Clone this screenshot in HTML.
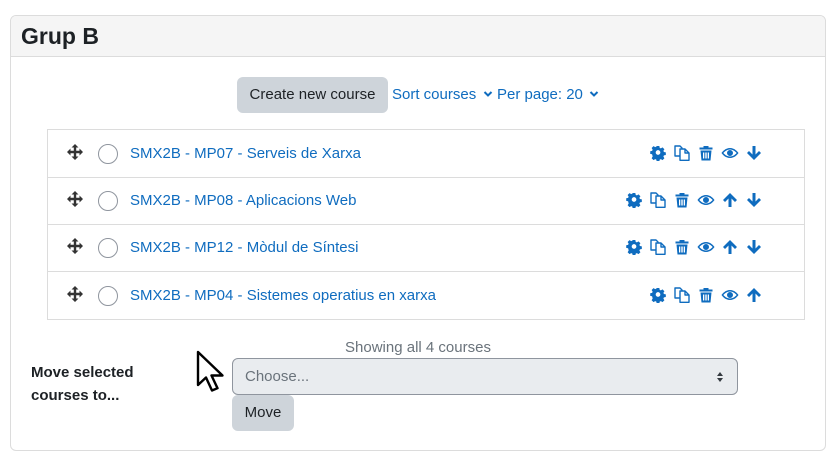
<!DOCTYPE html>
<html><head><meta charset="utf-8"><style>
*{box-sizing:border-box;margin:0;padding:0}
body{width:835px;height:468px;background:#fff;font-family:"Liberation Sans",sans-serif;color:#1d2125;position:relative;overflow:hidden}
.a{position:absolute}
.card{left:10px;top:15px;width:816px;height:436px;border:1px solid #dcdcdc;border-radius:6px;overflow:hidden}
.hdr{left:0;top:0;width:100%;height:41px;background:#f5f5f5;border-bottom:1px solid #dcdcdc}
.title{left:10px;top:7px;font-size:23px;font-weight:bold}
.btn{background:#ced4da;border-radius:6px;font-size:15px;color:#1d2125;text-align:center}
.link{color:#0f6cbf;font-size:15px}
.list{left:47px;top:129px;width:758px;height:191px;border:1px solid #dcdcdc}
.row{position:absolute;left:0;width:100%;height:48px;border-bottom:1px solid #dcdcdc}
.row:last-child{border-bottom:none}
.cb{position:absolute;left:50px;top:14px;width:20px;height:20px;border:1px solid #8f959e;border-radius:50%}
.nm{position:absolute;left:82px;top:15px;font-size:15px;color:#0f6cbf}
.mv{position:absolute;left:19px;top:14px}
.ic{position:absolute;top:15px}
</style></head><body>
<svg width="0" height="0" style="position:absolute"><defs>
<symbol id="gear" viewBox="0 0 16 16"><path fill="#0f6cbf" d="M6.6 1h2.8l.4 2 1.2.6 1.8-1.1 2 2-1.1 1.8.6 1.2 2 .4v2.8l-2 .4-.6 1.2 1.1 1.8-2 2-1.8-1.1-1.2.6-.4 2H6.6l-.4-2-1.2-.6-1.8 1.1-2-2 1.1-1.8L1.7 9.8l-2-.4V6.6l2-.4.6-1.2L1.2 3.2l2-2L5 2.3l1.2-.6zM8 5.5a2.5 2.5 0 100 5 2.5 2.5 0 000-5z" transform="translate(0.5 0) scale(.94)"/></symbol>
<symbol id="copy" viewBox="0 0 16 16"><g fill="none" stroke="#0f6cbf" stroke-width="1.4" stroke-linejoin="round"><path d="M1 1h5l2 2v8H1z"/><path d="M6 4h5l4 4v7.3H6z" fill="#fff"/><path d="M11 4v4h4"/></g></symbol>
<symbol id="trash" viewBox="0 0 16 16"><path fill="#0f6cbf" d="M5.5 1h5v1.5h4V4.5h-13V2.5h4zM2.5 5.5h11l-1 10h-9zM5 7.5v6h1.3v-6zm2.3 0v6h1.4v-6zm2.4 0v6H11v-6z"/></symbol>
<symbol id="eye" viewBox="0 0 18 16"><path fill="#0f6cbf" d="M9 3C4.5 3 1.5 6.5 0.5 8c1 1.5 4 5 8.5 5s7.5-3.5 8.5-5C16.5 6.5 13.5 3 9 3zm0 1.5c3 0 5.4 2 6.6 3.5C14.4 9.5 12 11.5 9 11.5S3.6 9.5 2.4 8C3.6 6.5 6 4.5 9 4.5zM9 5a3 3 0 100 6 3 3 0 000-6z"/></symbol>
<symbol id="up" viewBox="0 0 16 16"><path fill="#0f6cbf" d="M8 1l7 7-2 2-3.5-3.5V15h-3V6.5L3 10 1 8z"/></symbol>
<symbol id="down" viewBox="0 0 16 16"><path fill="#0f6cbf" d="M8 15l7-7-2-2-3.5 3.5V1h-3v8.5L3 6 1 8z"/></symbol>
<symbol id="move" viewBox="0 0 16 16"><path fill="#333" d="M8 0l3.5 3.5H9.2v3.3h3.3V4.5L16 8l-3.5 3.5V9.2H9.2v3.3h2.3L8 16l-3.5-3.5h2.3V9.2H3.5v2.3L0 8l3.5-3.5v2.3h3.3V3.5H4.5z"/></symbol>
</defs></svg>
<div class="a card">
 <div class="a hdr"><div class="a title">Grup B</div></div>
</div>
<div class="a btn" style="left:237px;top:77px;width:151px;height:36px;line-height:36px">Create new course</div>
<div class="a link" style="left:392px;top:86px">Sort courses</div>
<svg class="a" style="left:483px;top:90px" width="10" height="8" viewBox="0 0 10 8"><path d="M1.5 2l3.5 3.5L8.5 2" stroke="#0f6cbf" stroke-width="2" fill="none"/></svg>
<div class="a link" style="left:497px;top:86px">Per page: 20</div>
<svg class="a" style="left:589px;top:90px" width="10" height="8" viewBox="0 0 10 8"><path d="M1.5 2l3.5 3.5L8.5 2" stroke="#0f6cbf" stroke-width="2" fill="none"/></svg>

<div class="a list">
 <div class="row" style="top:0">
  <svg class="mv" width="16" height="16"><use href="#move"/></svg><div class="cb"></div><div class="nm">SMX2B - MP07 - Serveis de Xarxa</div>
  <svg class="ic" style="left:602px" width="16" height="16"><use href="#gear"/></svg>
  <svg class="ic" style="left:626px" width="16" height="16"><use href="#copy"/></svg>
  <svg class="ic" style="left:650px" width="16" height="16"><use href="#trash"/></svg>
  <svg class="ic" style="left:673px" width="18" height="16"><use href="#eye"/></svg>
  <svg class="ic" style="left:698px" width="16" height="16"><use href="#down"/></svg>
 </div>
 <div class="row" style="top:47px">
  <svg class="mv" width="16" height="16"><use href="#move"/></svg><div class="cb"></div><div class="nm">SMX2B - MP08 - Aplicacions Web</div>
  <svg class="ic" style="left:578px" width="16" height="16"><use href="#gear"/></svg>
  <svg class="ic" style="left:602px" width="16" height="16"><use href="#copy"/></svg>
  <svg class="ic" style="left:626px" width="16" height="16"><use href="#trash"/></svg>
  <svg class="ic" style="left:649px" width="18" height="16"><use href="#eye"/></svg>
  <svg class="ic" style="left:674px" width="16" height="16"><use href="#up"/></svg>
  <svg class="ic" style="left:698px" width="16" height="16"><use href="#down"/></svg>
 </div>
 <div class="row" style="top:94px">
  <svg class="mv" width="16" height="16"><use href="#move"/></svg><div class="cb"></div><div class="nm">SMX2B - MP12 - Mòdul de Síntesi</div>
  <svg class="ic" style="left:578px" width="16" height="16"><use href="#gear"/></svg>
  <svg class="ic" style="left:602px" width="16" height="16"><use href="#copy"/></svg>
  <svg class="ic" style="left:626px" width="16" height="16"><use href="#trash"/></svg>
  <svg class="ic" style="left:649px" width="18" height="16"><use href="#eye"/></svg>
  <svg class="ic" style="left:674px" width="16" height="16"><use href="#up"/></svg>
  <svg class="ic" style="left:698px" width="16" height="16"><use href="#down"/></svg>
 </div>
 <div class="row" style="top:142px">
  <svg class="mv" width="16" height="16"><use href="#move"/></svg><div class="cb"></div><div class="nm">SMX2B - MP04 - Sistemes operatius en xarxa</div>
  <svg class="ic" style="left:602px" width="16" height="16"><use href="#gear"/></svg>
  <svg class="ic" style="left:626px" width="16" height="16"><use href="#copy"/></svg>
  <svg class="ic" style="left:650px" width="16" height="16"><use href="#trash"/></svg>
  <svg class="ic" style="left:673px" width="18" height="16"><use href="#eye"/></svg>
  <svg class="ic" style="left:698px" width="16" height="16"><use href="#up"/></svg>
 </div>
</div>

<div class="a" style="left:0;width:835px;top:339px;text-align:center;font-size:15px;color:#6a737b;padding-left:1px">Showing all 4 courses</div>
<div class="a" style="left:31px;top:361px;font-size:15px;font-weight:bold;line-height:23px">Move selected<br>courses to...</div>
<div class="a" style="left:232px;top:358px;width:506px;height:37px;background:#e9ecef;border:1px solid #8f959e;border-radius:6px;font-size:15px;color:#6a737b;padding:9px 12px">Choose...</div>
<svg class="a" style="left:716px;top:371px" width="8" height="12" viewBox="0 0 8 12"><path d="M4 1l3 4H1zM4 11L1 7h6z" fill="#343a40"/></svg>
<div class="a btn" style="left:232px;top:395px;width:62px;height:36px;line-height:36px">Move</div>
<svg class="a" style="left:196px;top:350px" width="30" height="44" viewBox="0 0 30 44"><path d="M2 2v33l8-7.5 6 13 5.5-2.3-6-12.7h11z" fill="#fff" stroke="#000" stroke-width="2.4" stroke-linejoin="round"/></svg>
</body></html>
